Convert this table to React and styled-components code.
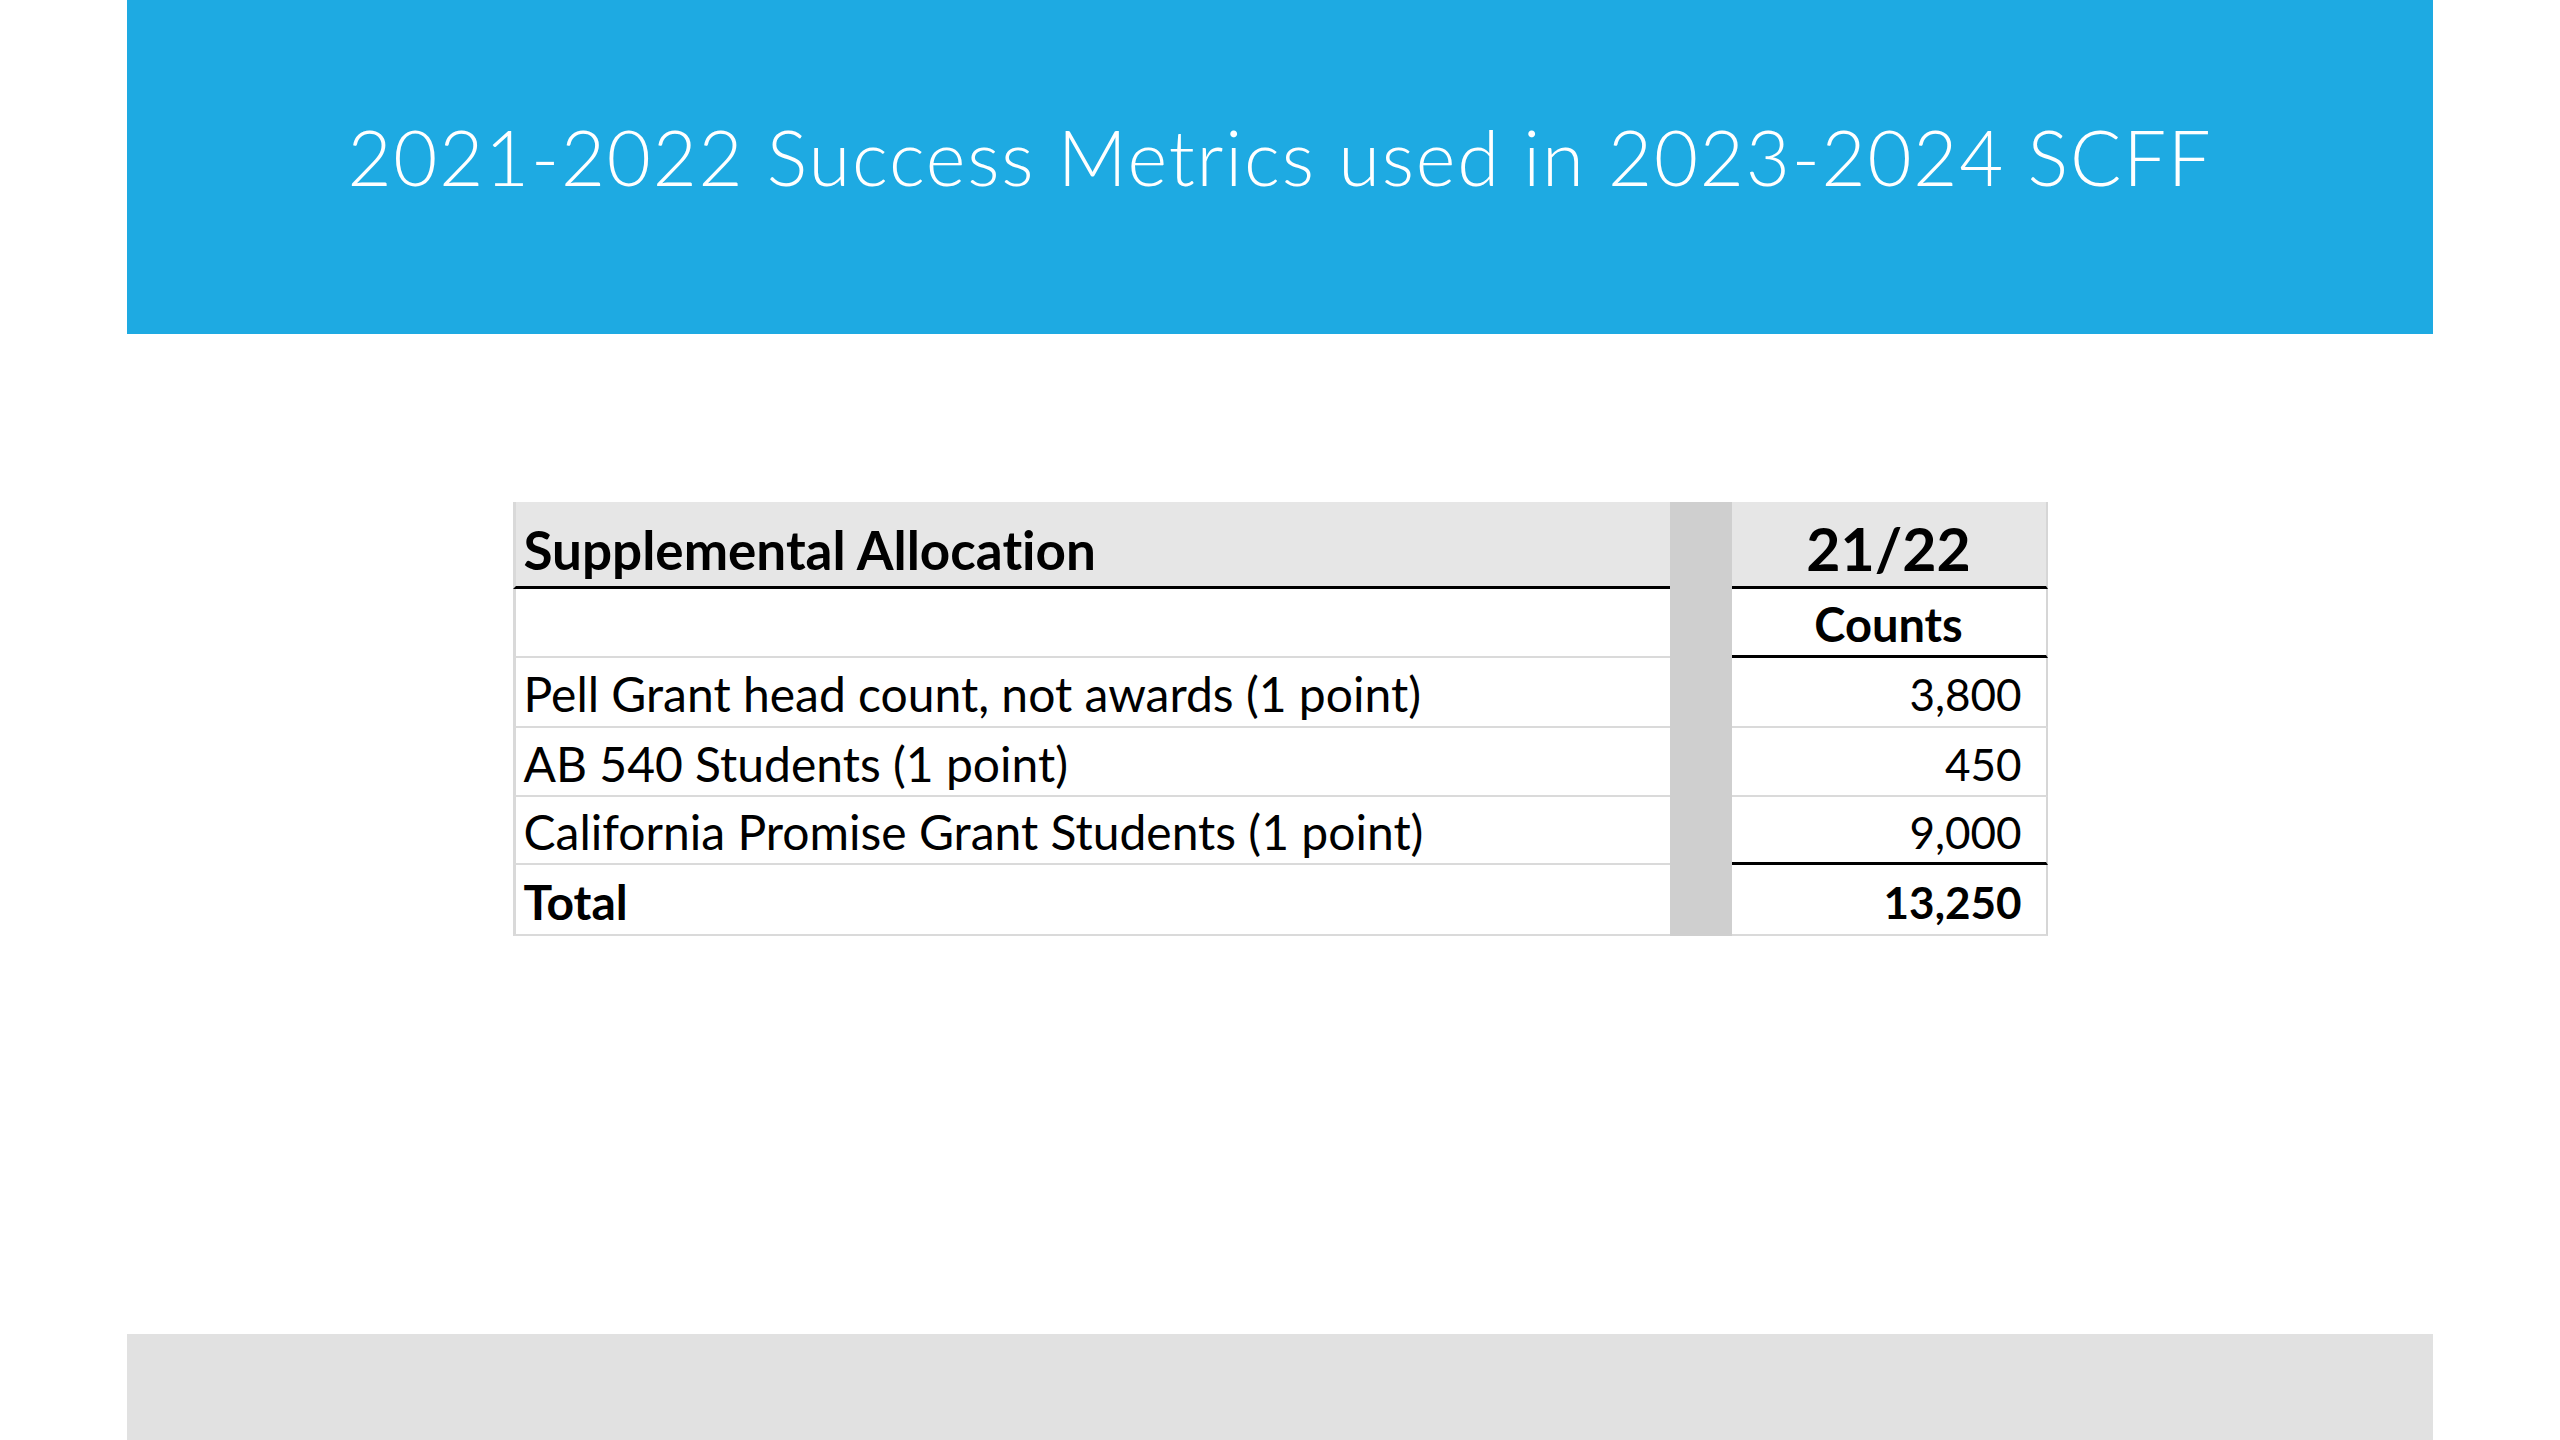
import React from "react";
import styled, { createGlobalStyle } from "styled-components";

const Global = createGlobalStyle`
  html, body { margin: 0; padding: 0; background: #ffffff; }
  body {
    font-family: Lato, "Open Sans", sans-serif;
    color: #000;
    font-variant-ligatures: none;
  }
  * { box-sizing: border-box; }
`;

const Slide = styled.div`
  width: 2306px;
  height: 1440px;
  margin: 0 auto;
  display: flex;
  flex-direction: column;
  background: #ffffff;
`;

const Banner = styled.header`
  height: 334px;
  flex: none;
  background: #1eaae2;
  display: flex;
  justify-content: center;
  align-items: flex-start;
  padding-top: 119px;
`;

const Title = styled.h1`
  margin: 0;
  font-family: Lato, sans-serif;
  font-weight: 300;
  font-size: 76px;
  line-height: 1;
  color: #ffffff;
  letter-spacing: 1.8px;
  white-space: nowrap;
`;

const Body = styled.main`
  flex: 1;
  display: flex;
  justify-content: center;
  align-items: flex-start;
  padding-top: 168px;
`;

const Footer = styled.footer`
  height: 106px;
  flex: none;
  background: #e1e1e1;
`;

const Table = styled.div`
  display: grid;
  grid-template-columns: 1157px 62px 316px;
  grid-template-rows: 87px 69px 70px 69px 68px 71px;
`;

const Gutter = styled.div`
  grid-column: 2;
  grid-row: 1 / -1;
  background: #cfcfcf;
`;

const Label = styled.div`
  grid-column: 1;
  display: flex;
  align-items: ${(p) => (p.$head ? "flex-end" : "center")};
  padding: ${(p) => (p.$head ? "0 0 10px 8px" : "4px 0 0 8px")};
  border-left: 3px solid #d9d9d9;
  border-bottom: ${(p) => (p.$head ? "3px solid #000" : "2px solid #dadada")};
  background: ${(p) => (p.$head ? "#e6e6e6" : "#ffffff")};
  font-family: Lato, sans-serif;
  font-size: ${(p) => (p.$head ? "53px" : "48px")};
  font-weight: ${(p) => (p.$bold ? 700 : 400)};
  line-height: 1;
  white-space: nowrap;
`;

const Value = styled.div`
  grid-column: 3;
  display: flex;
  align-items: ${(p) => (p.$head ? "flex-end" : "center")};
  justify-content: ${(p) => (p.$center ? "center" : "flex-end")};
  padding: ${(p) =>
    p.$head ? "0 0 8px 0" : p.$center ? "5px 0 0 0" : "4px 24px 0 0"};
  border-right: 2px solid #d6d6d6;
  border-bottom: ${(p) =>
    p.$rule === "dark" ? "3px solid #000" : "2px solid #dadada"};
  background: ${(p) => (p.$head ? "#e6e6e6" : "#ffffff")};
  font-family: Lato, sans-serif;
  font-size: ${(p) => (p.$head ? "59px" : p.$center ? "47px" : "44px")};
  font-weight: ${(p) => (p.$bold ? 700 : 400)};
  line-height: 1;
  white-space: nowrap;
`;

const rows = [
  { label: "Pell Grant head count, not awards (1 point)", value: "3,800", rule: "light" },
  { label: "AB 540 Students (1 point)", value: "450", rule: "light" },
  { label: "California Promise Grant Students (1 point)", value: "9,000", rule: "dark" },
  { label: "Total", value: "13,250", rule: "light", bold: true },
];

export default function App() {
  return (
    <>
      <Global />
      <Slide>
        <Banner>
          <Title>2021-2022 Success Metrics used in 2023-2024 SCFF</Title>
        </Banner>
        <Body>
          <Table>
            <Label $head $bold>Supplemental Allocation</Label>
            <Gutter />
            <Value $head $bold $center $rule="dark">21/22</Value>
            <Label />
            <Value $bold $center $rule="dark">Counts</Value>
            {rows.map((r) => (
              <React.Fragment key={r.label}>
                <Label $bold={r.bold}>{r.label}</Label>
                <Value $bold={r.bold} $rule={r.rule}>{r.value}</Value>
              </React.Fragment>
            ))}
          </Table>
        </Body>
        <Footer />
      </Slide>
    </>
  );
}
